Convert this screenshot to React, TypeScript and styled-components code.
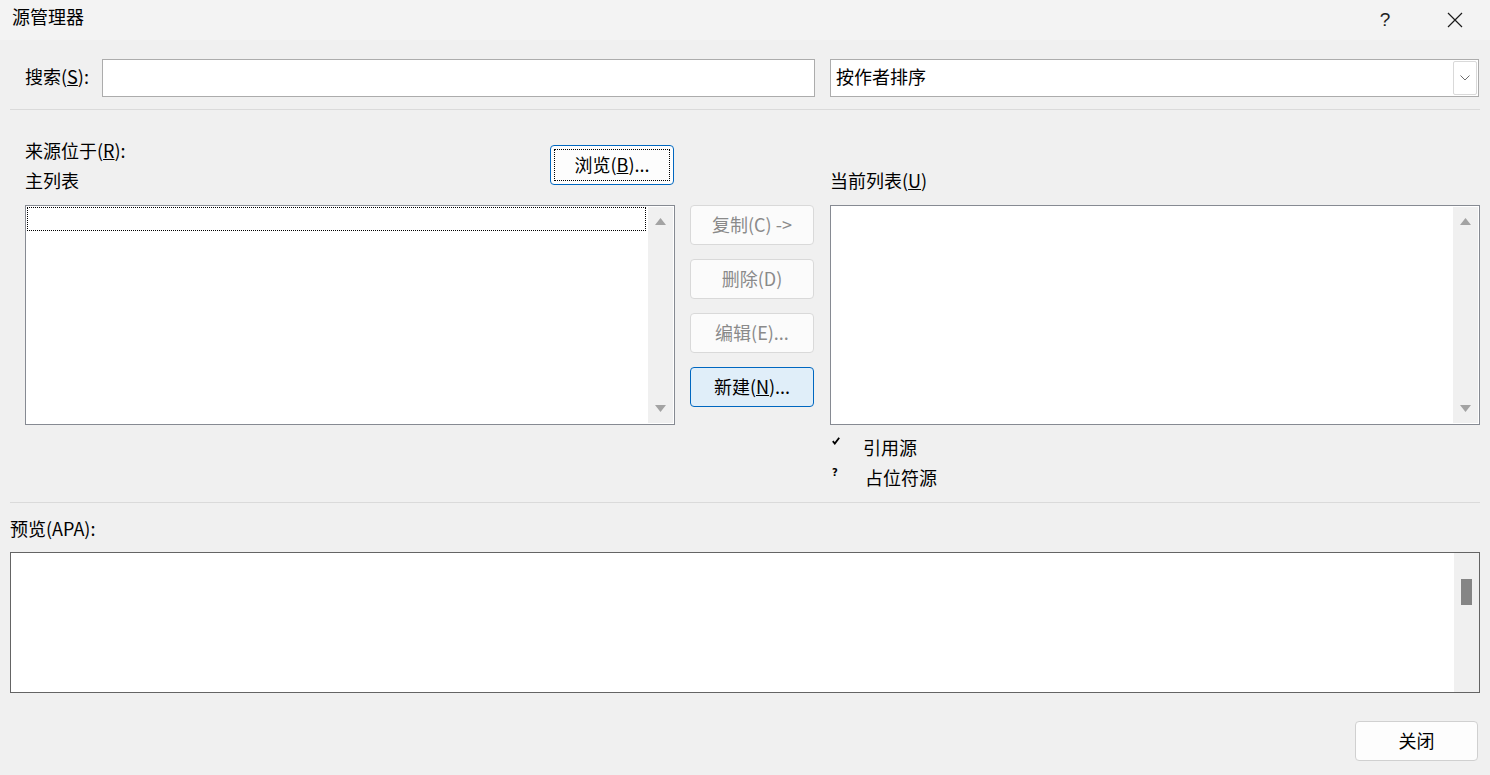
import styled, { createGlobalStyle } from "styled-components";

const GlobalStyle = createGlobalStyle`
  html, body {
    margin: 0;
    padding: 0;
    background: #f0f0f0;
  }
  body {
    font-family: "Noto Sans CJK SC", "Noto Sans", sans-serif;
    color: #000;
  }
`;

const Window = styled.div`
  width: 1490px;
  height: 775px;
  background: #f0f0f0;
  display: flex;
  flex-direction: column;
  overflow: hidden;
  font-size: 18px;
`;

const TitleBar = styled.div`
  height: 40px;
  background: #f3f3f3;
  display: flex;
  align-items: center;
  padding: 0 12px;
  flex-shrink: 0;
`;

const Title = styled.span`
  flex: 1;
  font-size: 18px;
  line-height: 32px;
  padding-bottom: 8px;
`;

const CaptionButton = styled.div`
  width: 46px;
  height: 36px;
  display: flex;
  align-items: center;
  justify-content: center;
  font-family: "Liberation Sans", sans-serif;
  font-size: 19px;
  color: #222;
  margin-left: 24px;
`;

const SearchRow = styled.div`
  margin-top: 19px;
  padding: 0 11px 0 25px;
  display: grid;
  grid-template-columns: 790px 1fr;
  column-gap: 15px;
`;

const SearchField = styled.div`
  display: flex;
  align-items: center;
`;

const FieldLabel = styled.label`
  width: 77px;
  line-height: 34px;
  padding-bottom: 4px;
`;

const TextInput = styled.div`
  flex: 1;
  height: 38px;
  box-sizing: border-box;
  border: 1px solid #acacac;
  background: #fff;
`;

const Select = styled.div`
  height: 38px;
  box-sizing: border-box;
  border: 1px solid #acacac;
  background: #fff;
  display: flex;
  align-items: center;
  padding: 0 1px 0 5px;
`;

const SelectText = styled.span`
  flex: 1;
  line-height: 32px;
  padding-bottom: 4px;
`;

const SelectArrow = styled.div`
  width: 24px;
  height: 34px;
  box-sizing: border-box;
  border: 1px solid #d9d9d9;
  border-radius: 2px;
  display: flex;
  align-items: center;
  justify-content: center;
`;

const Divider = styled.div<{ $top: number }>`
  height: 1px;
  background: #dadada;
  margin: ${(p) => p.$top}px 10px 0;
  flex-shrink: 0;
`;

const Sources = styled.div`
  margin-top: 27px;
  padding-left: 25px;
  display: grid;
  grid-template-columns: 650px 125px 650px;
  grid-template-rows: 60px 220px auto;
  column-gap: 15px;
  row-gap: 8px;
`;

const ListHeader = styled.div<{ $col: number }>`
  grid-column: ${(p) => p.$col};
  grid-row: 1;
  display: flex;
  justify-content: space-between;
  align-items: flex-start;
`;

const LabelStack = styled.div`
  display: flex;
  flex-direction: column;
  justify-content: flex-end;
  height: 100%;
`;

const Label = styled.div`
  line-height: 26px;
  padding-bottom: 4px;
`;

const Button = styled.div<{ $disabled?: boolean; $active?: boolean }>`
  width: 124px;
  height: 40px;
  box-sizing: border-box;
  border-radius: 4px;
  display: flex;
  align-items: center;
  justify-content: center;
  border: 1px solid ${(p) => (p.$active ? "#0067c0" : "#d9d9d9")};
  background: ${(p) => (p.$active ? "#e0eef9" : p.$disabled ? "#fbfbfb" : "#fdfdfd")};
  color: ${(p) => (p.$disabled ? "#8a8a8a" : "#000")};
  line-height: 28px;
  padding-bottom: 2px;
`;

const BrowseButton = styled(Button)`
  margin-top: 8px;
  margin-right: 1px;
  border-color: #0067c0;
  padding: 3px;
`;

const FocusRect = styled.div`
  flex: 1;
  align-self: stretch;
  border: 1px dotted #000;
  display: flex;
  align-items: center;
  justify-content: center;
  padding-bottom: 2px;
`;

const ListBox = styled.div<{ $col: number }>`
  grid-column: ${(p) => p.$col};
  grid-row: 2;
  border: 1px solid #868a92;
  background: #fff;
  display: flex;
`;

const ListBody = styled.div`
  flex: 1;
  padding: 1px;
`;

const ListFocusRow = styled.div`
  height: 24px;
  box-sizing: border-box;
  border: 1px dotted #000;
`;

const ScrollTrack = styled.div<{ $arrows?: boolean }>`
  width: 25px;
  margin: 1px;
  background: #f0f0f0;
  display: flex;
  flex-direction: column;
  justify-content: ${(p) => (p.$arrows ? "space-between" : "flex-start")};
  align-items: center;
  padding: 11px 0;
  box-sizing: border-box;
`;

const ButtonColumn = styled.div`
  grid-column: 2;
  grid-row: 2;
  display: flex;
  flex-direction: column;
  gap: 14px;
`;

const Legend = styled.div`
  grid-column: 3;
  grid-row: 3;
  margin-top: 1px;
  display: grid;
  grid-template-columns: 33px 1fr;
`;

const LegendMark = styled.div`
  height: 30px;
  display: flex;
  align-items: flex-start;
  padding: 3px 0 0 2px;
  box-sizing: border-box;
  font-family: "DejaVu Sans", sans-serif;
  font-weight: bold;
  font-size: 10px;
`;

const LegendText = styled.div<{ $shift?: number }>`
  line-height: 26px;
  padding-bottom: 4px;
  padding-left: ${(p) => p.$shift ?? 0}px;
`;

const PreviewLabel = styled.div`
  margin-top: 12px;
  padding-left: 10px;
  line-height: 26px;
  padding-bottom: 4px;
`;

const PreviewBox = styled.div`
  margin: 7px 10px 0;
  height: 141px;
  box-sizing: border-box;
  border: 1px solid #646464;
  background: #fff;
  display: flex;
  justify-content: flex-end;
`;

const PreviewTrack = styled.div`
  width: 25px;
  background: #f0f0f0;
  display: flex;
  justify-content: center;
  padding-top: 26px;
`;

const Thumb = styled.div`
  width: 11px;
  height: 26px;
  background: #858585;
`;

const Footer = styled.div`
  margin-top: 28px;
  padding-right: 12px;
  display: flex;
  justify-content: flex-end;
`;

const CloseButton = styled(Button)`
  width: 123px;
  background: #fdfdfd;
  border-color: #d0d0d0;
`;

const ArrowUp = () => (
  <svg width="11" height="7" viewBox="0 0 11 7">
    <path d="M5.5 0 L11 7 L0 7 Z" fill="#a3a3a3" />
  </svg>
);

const ArrowDown = () => (
  <svg width="11" height="7" viewBox="0 0 11 7">
    <path d="M0 0 L11 0 L5.5 7 Z" fill="#a3a3a3" />
  </svg>
);

const Chevron = () => (
  <svg width="10" height="6" viewBox="0 0 10 6">
    <path d="M0.5 0.5 L5 5 L9.5 0.5" fill="none" stroke="#6d6d6d" strokeWidth="1" />
  </svg>
);

const CloseIcon = () => (
  <svg width="16" height="16" viewBox="0 0 16 16">
    <path d="M1 1 L15 15 M15 1 L1 15" stroke="#1a1a1a" strokeWidth="1.2" />
  </svg>
);

const CheckMark = () => (
  <svg width="8" height="8" viewBox="0 0 8 8">
    <path d="M0.8 4.2 L2.8 6.6 L7.2 0.8" fill="none" stroke="#000" strokeWidth="1.8" />
  </svg>
);

const App = () => {
  return (
    <Window>
      <GlobalStyle />
      <TitleBar>
        <Title>源管理器</Title>
        <CaptionButton>?</CaptionButton>
        <CaptionButton>
          <CloseIcon />
        </CaptionButton>
      </TitleBar>

      <SearchRow>
        <SearchField>
          <FieldLabel>
            搜索(<u>S</u>):
          </FieldLabel>
          <TextInput />
        </SearchField>
        <Select>
          <SelectText>按作者排序</SelectText>
          <SelectArrow>
            <Chevron />
          </SelectArrow>
        </Select>
      </SearchRow>

      <Divider $top={12} />

      <Sources>
        <ListHeader $col={1}>
          <LabelStack>
            <Label>
              来源位于(<u>R</u>):
            </Label>
            <Label>主列表</Label>
          </LabelStack>
          <BrowseButton>
            <FocusRect>
              浏览(<u>B</u>)...
            </FocusRect>
          </BrowseButton>
        </ListHeader>
        <ListHeader $col={3}>
          <LabelStack>
            <Label>
              当前列表(<u>U</u>)
            </Label>
          </LabelStack>
        </ListHeader>

        <ListBox $col={1}>
          <ListBody>
            <ListFocusRow />
          </ListBody>
          <ScrollTrack $arrows>
            <ArrowUp />
            <ArrowDown />
          </ScrollTrack>
        </ListBox>

        <ButtonColumn>
          <Button $disabled>复制(C) -&gt;</Button>
          <Button $disabled>删除(D)</Button>
          <Button $disabled>编辑(E)...</Button>
          <Button $active>
            新建(<u>N</u>)...
          </Button>
        </ButtonColumn>

        <ListBox $col={3}>
          <ListBody />
          <ScrollTrack $arrows>
            <ArrowUp />
            <ArrowDown />
          </ScrollTrack>
        </ListBox>

        <Legend>
          <LegendMark>
            <CheckMark />
          </LegendMark>
          <LegendText>引用源</LegendText>
          <LegendMark>?</LegendMark>
          <LegendText $shift={2}>占位符源</LegendText>
        </Legend>
      </Sources>

      <Divider $top={8} />

      <PreviewLabel>预览(APA):</PreviewLabel>
      <PreviewBox>
        <PreviewTrack>
          <Thumb />
        </PreviewTrack>
      </PreviewBox>

      <Footer>
        <CloseButton>关闭</CloseButton>
      </Footer>
    </Window>
  );
};

export default App;
